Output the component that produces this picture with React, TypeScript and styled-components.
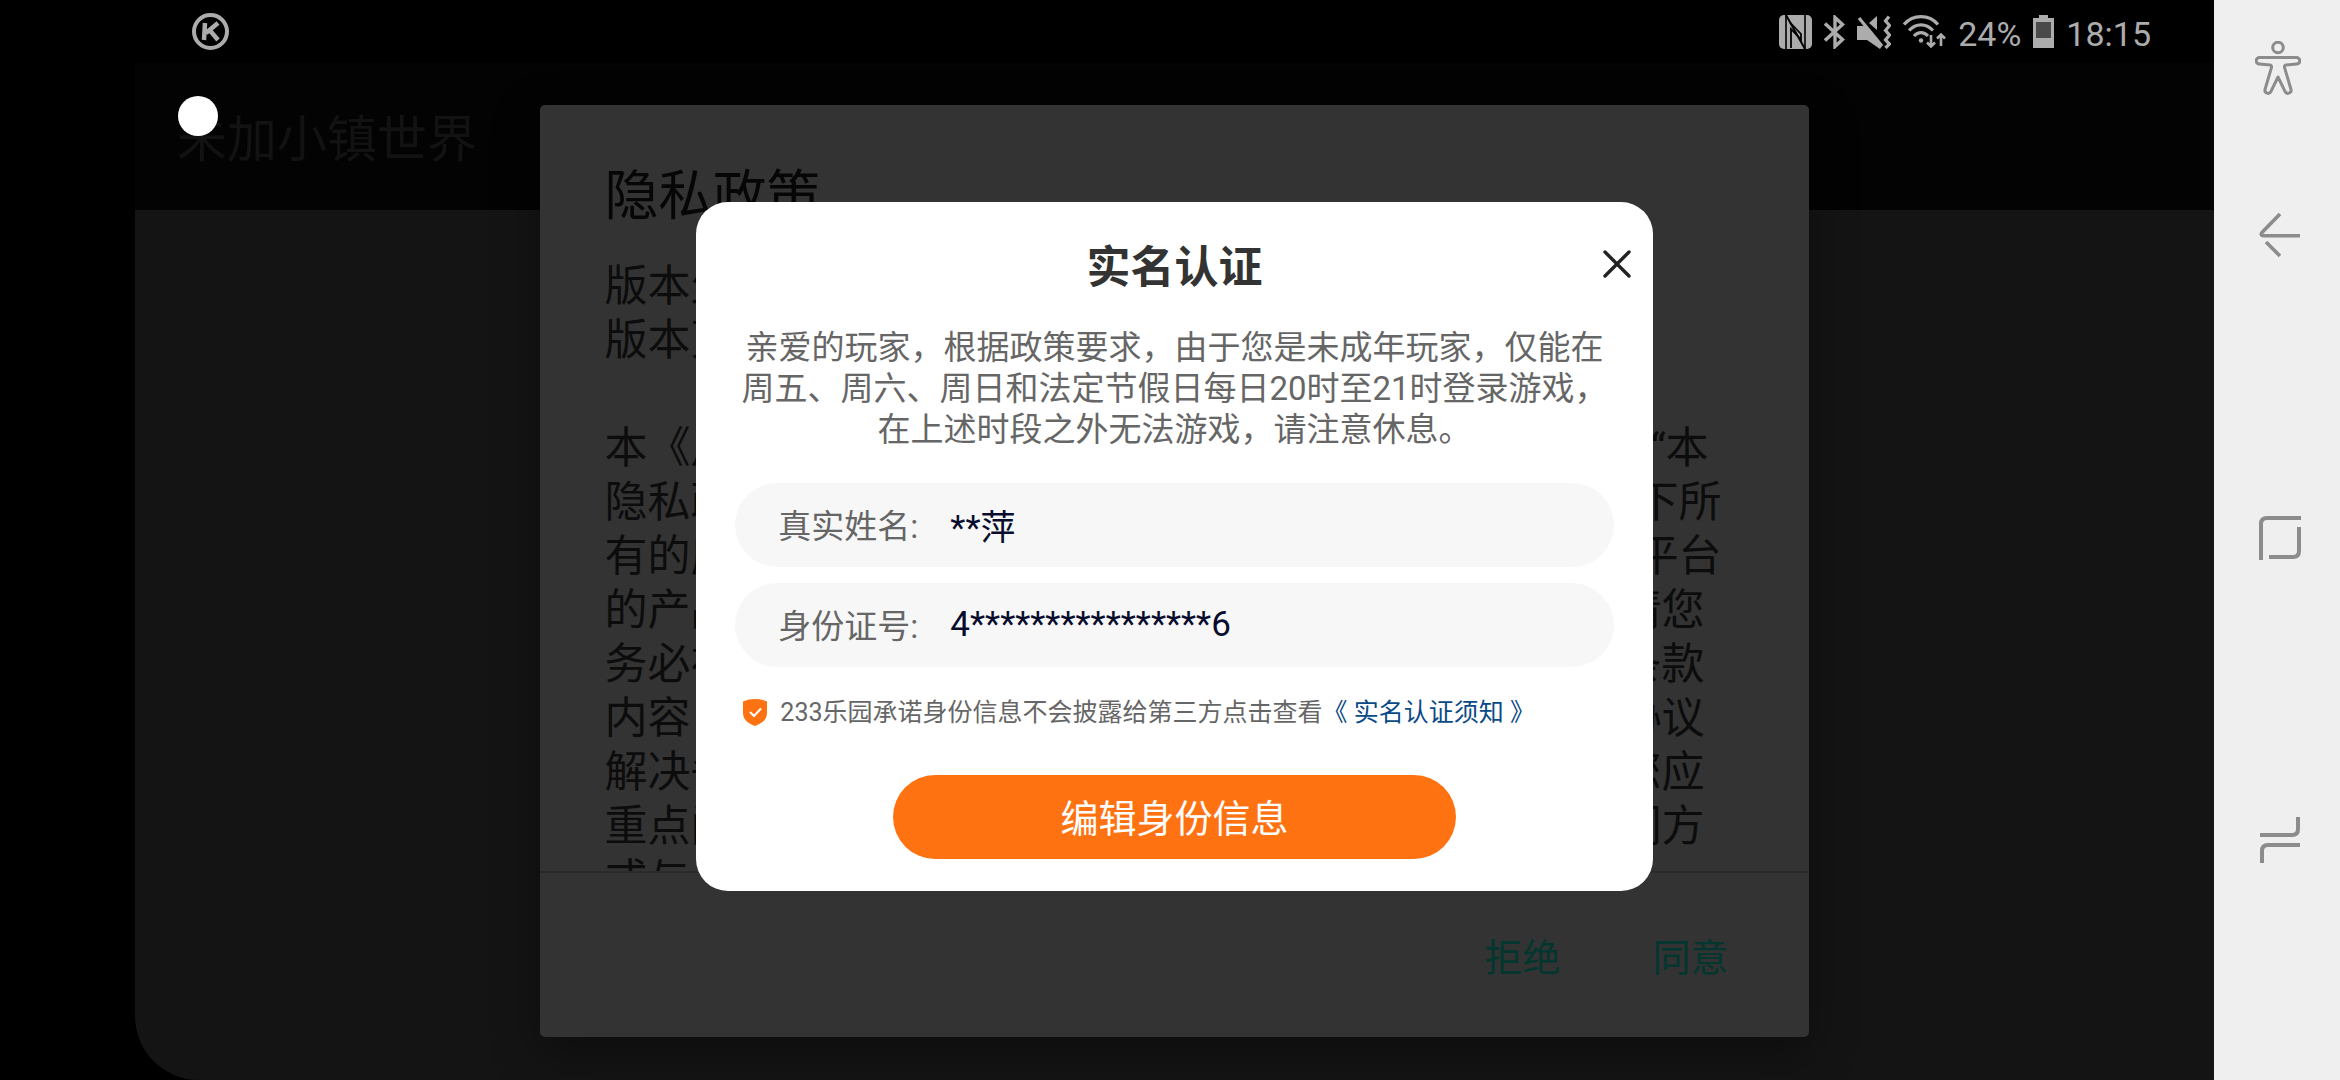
import React from "react";
import styled, { createGlobalStyle } from "styled-components";

const GlobalStyle = createGlobalStyle`
  * { box-sizing: border-box; }
  html, body, #root { height: 100%; margin: 0; }
  body {
    background: #000;
    font-family: Roboto, "Noto Sans CJK SC", sans-serif;
    overflow: hidden;
  }
  button, input { font: inherit; border: 0; padding: 0; margin: 0; background: none; color: inherit; }
  button { cursor: pointer; }
  h1, h2, p { margin: 0; font-weight: 400; }
  svg { display: block; }
`;

const Screen = styled.div`
  display: grid;
  grid-template-columns: 135px minmax(0, 1fr) 126px;
  height: 100vh;
  background: #000;
`;

const Main = styled.main`
  grid-column: 2;
  position: relative;
  display: flex;
  flex-direction: column;
  min-height: 0;
`;

const StatusBar = styled.header`
  display: flex;
  align-items: center;
  justify-content: space-between;
  height: 63px;
  padding: 0 63px 0 57px;
  color: #acacac;
`;

const StatusIcons = styled.div`
  display: flex;
  align-items: center;
  gap: 12px;
`;

const StatusText = styled.span`
  padding-top: 4px;
  font-size: 34px;
  line-height: 40px;
`;

const AppBar = styled.div`
  display: flex;
  align-items: center;
  height: 147px;
  padding: 6px 0 0 42px;
  background: #030303;
`;

const AppTitle = styled.h1`
  font-size: 50px;
  line-height: 60px;
  color: #121212;
`;

const Page = styled.div`
  flex: 1;
  background: #141414;
  border-bottom-left-radius: 64px;
`;

const FloatingDot = styled.div`
  position: absolute;
  top: 96px;
  left: 43px;
  width: 40px;
  height: 40px;
  border-radius: 50%;
  background: #fff;
`;

const PolicyLayer = styled.div`
  position: absolute;
  inset: 63px 0 0;
  display: flex;
  justify-content: center;
  padding: 42px 0 43px;
`;

const PolicyDialog = styled.section`
  display: flex;
  flex-direction: column;
  width: 61%;
  padding-top: 56px;
  border-radius: 5px;
  background: #333;
  box-shadow: 0 16px 48px rgba(0, 0, 0, 0.35);
  overflow: hidden;
`;

const PolicyTitle = styled.h2`
  padding: 0 64px;
  margin-bottom: 26px;
  font-size: 54px;
  line-height: 72px;
  color: #060606;
`;

const PolicyBody = styled.div`
  flex: 1;
  min-height: 0;
  padding: 0 87px 0 64px;
  overflow: hidden;
  font-size: 43px;
  line-height: 54px;
  color: #0c0c0c;
`;

const PolicyLine = styled.p<{ $inset?: number }>`
  display: flex;
  justify-content: space-between;
  height: 54px;
  padding-right: ${(p) => p.$inset ?? 0}px;
  white-space: nowrap;
`;

const PolicyActions = styled.footer`
  display: flex;
  align-items: center;
  justify-content: flex-end;
  gap: 92px;
  height: 166px;
  padding: 6px 80px 0 0;
  border-top: 2px solid #2b2b2b;
`;

const PolicyAction = styled.button`
  font-size: 38px;
  line-height: 48px;
  color: #03362f;
`;

const ModalLayer = styled.div`
  position: absolute;
  inset: 0;
  display: flex;
  align-items: center;
  justify-content: center;
  padding-top: 12px;
`;

const Modal = styled.section`
  position: relative;
  display: flex;
  flex-direction: column;
  width: 46%;
  padding: 34px 39px 32px;
  border-radius: 32px;
  background: #fff;
`;

const ModalTitle = styled.h2`
  margin-bottom: 27px;
  font-size: 44px;
  font-weight: 700;
  line-height: 64px;
  text-align: center;
  color: #333;
`;

const CloseButton = styled.button`
  position: absolute;
  top: 42px;
  right: 16px;
  display: grid;
  place-items: center;
  width: 40px;
  height: 40px;
`;

const Notice = styled.p`
  margin-bottom: 33px;
  font-size: 33px;
  line-height: 41px;
  text-align: center;
  color: #666;
`;

const Fields = styled.form`
  display: grid;
  gap: 16px;
`;

const Field = styled.div`
  display: flex;
  align-items: center;
  height: 84px;
  padding: 0 43px;
  border-radius: 42px;
  background: #f7f7f8;
`;

const FieldLabel = styled.label`
  flex: 0 0 172px;
  padding-top: 4px;
  font-size: 33px;
  line-height: 48px;
  color: #666;
`;

const FieldInput = styled.input`
  flex: 1;
  min-width: 0;
  height: 48px;
  font-size: 35px;
  color: #080d2d;
  outline: 0;
`;

const Assurance = styled.p`
  display: flex;
  align-items: center;
  gap: 13px;
  margin: 28px 0 44px;
  padding-left: 8px;
  font-size: 25px;
  line-height: 36px;
  color: #666;
`;

const AssuranceLink = styled.a`
  color: #0a4a86;
  text-decoration: none;
`;

const PrimaryButton = styled.button`
  align-self: center;
  width: 64%;
  height: 84px;
  padding-top: 4px;
  border-radius: 42px;
  background: #ff7212;
  font-size: 38px;
  line-height: 48px;
  color: #fff;
`;

const NavBar = styled.nav`
  grid-column: 3;
  display: flex;
  flex-direction: column;
  align-items: center;
  padding: 41px 0 217px 2px;
  background: #efefef;
  color: #8c8c8c;
`;

const NavGroup = styled.div`
  flex: 1;
  display: flex;
  flex-direction: column;
  justify-content: space-between;
  padding: 117px 0 0 4px;
`;

const NavButton = styled.button`
  display: block;
`;

const policyLines: { start: string; end?: string; inset?: number }[] = [
  { start: "版本生" },
  { start: "版本更" },
  { start: "" },
  { start: "本《用", end: "“本", inset: 13 },
  { start: "隐私政", end: "下所" },
  { start: "有的应", end: "平台" },
  { start: "的产品", end: "请您", inset: 17 },
  { start: "务必在", end: "条款", inset: 17 },
  { start: "内容", end: "协议", inset: 17 },
  { start: "解决争", end: "您应", inset: 17 },
  { start: "重点阅", end: "们方", inset: 17 },
  { start: "或与" },
];

const line = { fill: "none", stroke: "currentColor" };

const KBadge = () => (
  <svg width="37" height="37" viewBox="0 0 37 37" {...line}>
    <circle cx="18.5" cy="18.5" r="16.5" strokeWidth="4" />
    <path d="M13 10 12 27M26 10 14 20M18 17.5l8 9.5" strokeWidth="4.5" />
  </svg>
);

const NfcIcon = () => (
  <svg width="33" height="34" viewBox="0 0 33 34">
    <rect width="33" height="34" rx="5" fill="currentColor" />
    <path d="M7.500 1 24 32.500V34H29L26 30V0H21v4z" fill="none" />
    <path d="M7 0v34M26 0v34" stroke="#000" strokeWidth="1.600" />
    <path d="M7 0 26 34" stroke="#000" strokeWidth="2" />
    <path d="M12 33V14l10 10.500V19L11 7.500" stroke="#000" strokeWidth="1.800" fill="none" />
  </svg>
);

const BluetoothIcon = () => (
  <svg width="21" height="34" viewBox="0 0 21 34" {...line} strokeWidth="3.4">
    <path d="M1 8.500 18.500 24.500 11 31.500V2.500l7.500 7L1 25.500" />
  </svg>
);

const MuteIcon = () => (
  <svg width="34" height="34" viewBox="0 0 34 34">
    <path d="M20 1v14l-8-7zM0 11h8l17 20-2 3-13-9H0z" fill="currentColor" />
    <path d="M2 3 25 31" stroke="currentColor" strokeWidth="3.2" />
    <path d="M32 1.500l-3.500 4.500 4 4.500-4 5 4 4.500-4 5 4 4-4 4" {...line} strokeWidth="3.2" />
  </svg>
);

const WifiIcon = () => (
  <svg width="43" height="34" viewBox="0 0 43 34" {...line} strokeWidth="3.2">
    <path d="M1 9.500C10-1 26-1 35 9.500M6 15.500c7-7.500 17-7.500 24 0M11 21c4-4.500 10-4.500 14 0" />
    <circle cx="18" cy="25.500" r="2.200" fill="currentColor" stroke="none" />
    <path d="M28 20v11M24 27.500l4 4 4-4M38 31V20M34 23.500l4-4 4 4" strokeWidth="2.6" />
  </svg>
);

const BatteryIcon = () => (
  <svg width="21" height="33" viewBox="0 0 21 33">
    <path d="M6 0h9v3h6v30H0V3h6z" fill="currentColor" />
    <rect x="3" y="7" width="15" height="16" fill="#4a4a4a" />
  </svg>
);

const PersonIcon = () => (
  <svg width="46" height="54" viewBox="0 0 46 54" {...line} strokeWidth="3" strokeLinejoin="round">
    <circle cx="23" cy="6.500" r="5.300" />
    <path d="M4.500 16.500h37a3.200 3.200 0 0 1 0 6.600L31 24c-1.200.2-1.700 1.200-1.500 2.400L36 48.500c.8 3.800-4.600 5.400-6 1.800L23 36l-7 14.300c-1.400 3.600-6.800 2-6-1.800l6.500-22.100c.2-1.200-.3-2.200-1.500-2.400l-10.500-.9a3.200 3.200 0 0 1 0-6.600z" />
  </svg>
);

const BackIcon = () => (
  <svg width="42" height="46" viewBox="0 0 42 46" {...line} strokeWidth="3.6">
    <path d="M21 2 3 20.500c-1.400 1.600-.8 3.300 1.200 3.300H41M7 30l14 14" />
  </svg>
);

const HomeIcon = () => (
  <svg width="42" height="46" viewBox="0 0 42 46" {...line} strokeWidth="4">
    <path d="M2 45V9q0-6 6-6h34M40 12v24q0 6-6 6H10" />
  </svg>
);

const RecentsIcon = () => (
  <svg width="42" height="46" viewBox="0 0 42 46" {...line} strokeWidth="4">
    <path d="M1 18h32q6 0 6-6V0M41 28H9q-6 0-6 6v12" />
  </svg>
);

const CloseIcon = () => (
  <svg width="28" height="28" viewBox="0 0 28 28" fill="none" stroke="#222" strokeWidth="3.4" strokeLinecap="round">
    <path d="M2 2l24 24M26 2 2 26" />
  </svg>
);

const ShieldIcon = () => (
  <svg width="24" height="27" viewBox="0 0 24 27">
    <path d="M12 0c4 0 8 .8 12 2.600V14c0 6.500-5 10.500-12 13C5 24.500 0 20.500 0 14V2.600C4 .8 8 0 12 0z" fill="#ff7212" />
    <path d="M7 13l4 4 7-7.500" fill="none" stroke="#fff" strokeWidth="2" />
  </svg>
);

export default function App() {
  return (
    <>
      <GlobalStyle />
      <Screen lang="zh-CN">
        <Main>
          <StatusBar>
            <KBadge />
            <StatusIcons>
              <NfcIcon />
              <BluetoothIcon />
              <MuteIcon />
              <WifiIcon />
              <StatusText>24%</StatusText>
              <BatteryIcon />
              <StatusText>18:15</StatusText>
            </StatusIcons>
          </StatusBar>
          <AppBar>
            <AppTitle>未加小镇世界</AppTitle>
          </AppBar>
          <Page />
          <FloatingDot />
          <PolicyLayer>
            <PolicyDialog>
              <PolicyTitle>隐私政策</PolicyTitle>
              <PolicyBody>
                {policyLines.map((l, i) => (
                  <PolicyLine key={i} $inset={l.inset}>
                    <span>{l.start}</span>
                    {l.end && <span>{l.end}</span>}
                  </PolicyLine>
                ))}
              </PolicyBody>
              <PolicyActions>
                <PolicyAction type="button">拒绝</PolicyAction>
                <PolicyAction type="button">同意</PolicyAction>
              </PolicyActions>
            </PolicyDialog>
          </PolicyLayer>
          <ModalLayer>
            <Modal>
              <ModalTitle>实名认证</ModalTitle>
              <CloseButton type="button">
                <CloseIcon />
              </CloseButton>
              <Notice>
                亲爱的玩家，根据政策要求，由于您是未成年玩家，仅能在周五、周六、周日和法定节假日每日20时至21时登录游戏，在上述时段之外无法游戏，请注意休息。
              </Notice>
              <Fields>
                <Field>
                  <FieldLabel htmlFor="real-name">真实姓名:</FieldLabel>
                  <FieldInput id="real-name" readOnly value="**萍" />
                </Field>
                <Field>
                  <FieldLabel htmlFor="id-number">身份证号:</FieldLabel>
                  <FieldInput id="id-number" readOnly value="4****************6" />
                </Field>
              </Fields>
              <Assurance>
                <ShieldIcon />
                <span>
                  233乐园承诺身份信息不会披露给第三方点击查看
                  <AssuranceLink href="#notice">《 实名认证须知 》</AssuranceLink>
                </span>
              </Assurance>
              <PrimaryButton type="button">编辑身份信息</PrimaryButton>
            </Modal>
          </ModalLayer>
        </Main>
        <NavBar>
          <NavButton type="button">
            <PersonIcon />
          </NavButton>
          <NavGroup>
            <NavButton type="button">
              <BackIcon />
            </NavButton>
            <NavButton type="button">
              <HomeIcon />
            </NavButton>
            <NavButton type="button">
              <RecentsIcon />
            </NavButton>
          </NavGroup>
        </NavBar>
      </Screen>
    </>
  );
}
